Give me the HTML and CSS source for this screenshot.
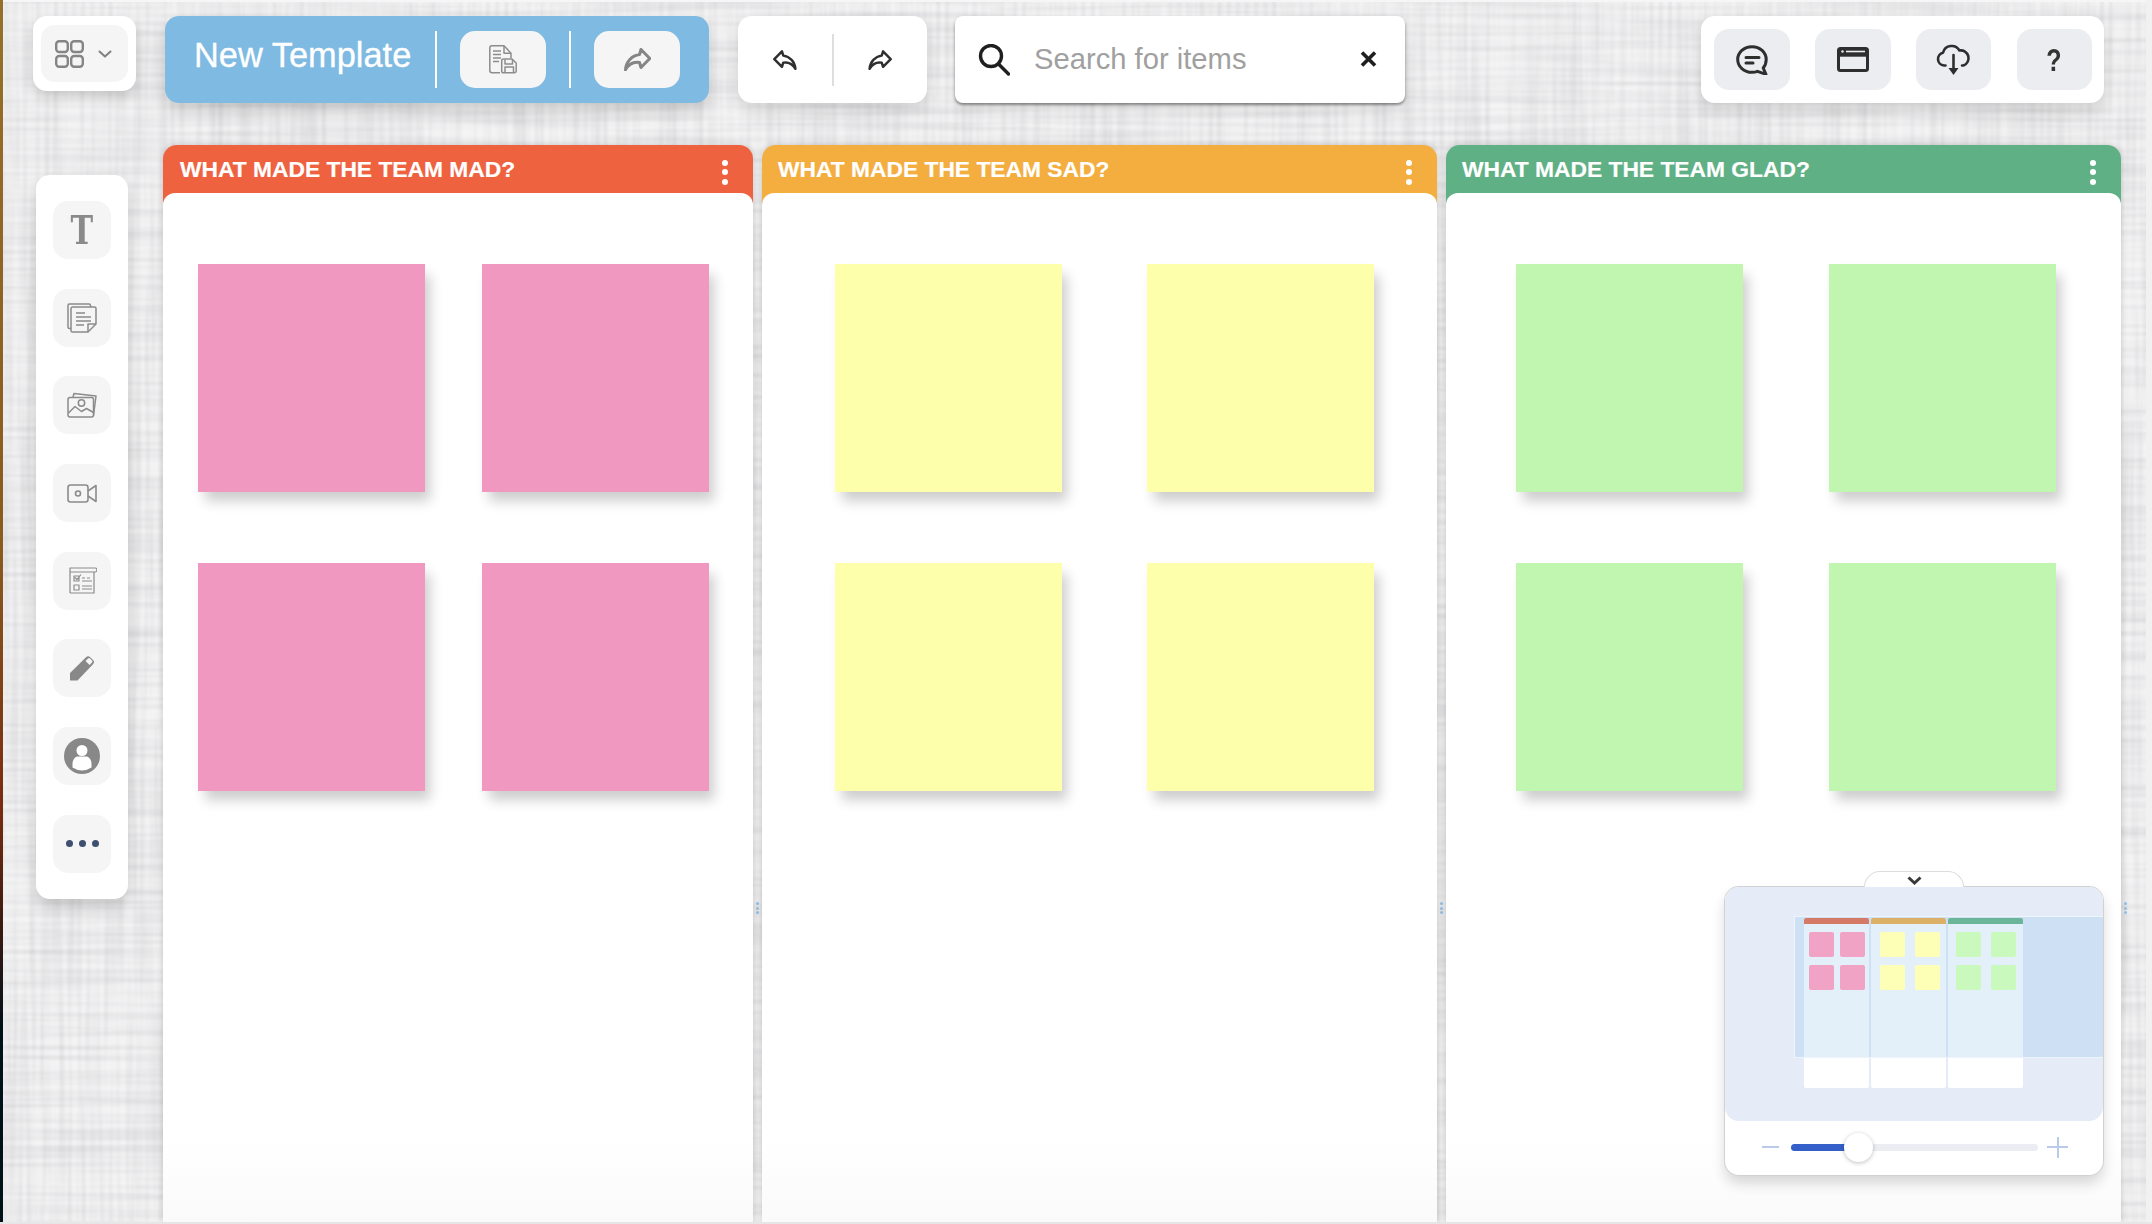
FILE: index.html
```html
<!DOCTYPE html>
<html lang="en">
<head>
<meta charset="utf-8">
<title>New Template</title>
<link rel="stylesheet" href="styles.css">
</head>
<body>
<svg class="linen" aria-hidden="true">
  <filter id="linen-filter" x="0" y="0" width="100%" height="100%" color-interpolation-filters="sRGB">
    <feTurbulence type="fractalNoise" baseFrequency="0.005 0.22" numOctaves="3" seed="4" result="a"/>
    <feColorMatrix in="a" type="matrix" values="0 0 0 0 0.35  0 0 0 0 0.35  0 0 0 0 0.38  0.24 0 0 0 -0.09" result="ha"/>
    <feTurbulence type="fractalNoise" baseFrequency="0.22 0.005" numOctaves="3" seed="9" result="b"/>
    <feColorMatrix in="b" type="matrix" values="0 0 0 0 0.35  0 0 0 0 0.35  0 0 0 0 0.38  0.24 0 0 0 -0.09" result="va"/>
    <feFlood flood-color="#f4f4f5" result="base"/>
    <feMerge result="woven">
      <feMergeNode in="base"/>
      <feMergeNode in="ha"/>
      <feMergeNode in="va"/>
    </feMerge>
    <feGaussianBlur in="woven" stdDeviation="0.8"/>
  </filter>
  <rect width="100%" height="100%" filter="url(#linen-filter)"/>
</svg>

<header class="toolbar">
  <div class="logo-box">
    <button class="logo-btn">
      <svg class="ico-apps" viewBox="0 0 29 28"><rect x="1.2" y="1.2" width="11.6" height="10.8" rx="3"/><rect x="16.2" y="1.2" width="11.6" height="10.8" rx="3"/><rect x="1.2" y="16" width="11.6" height="10.8" rx="3"/><rect x="16.2" y="16" width="11.6" height="10.8" rx="3"/></svg>
      <svg class="ico-caret" viewBox="0 0 14 8"><path d="M1.5 1.5 7 6.5l5.5-5"/></svg>
    </button>
  </div>

  <div class="title-bar">
    <div class="title">New Template</div>
    <span class="sep"></span>
    <button class="tb-btn">
      <svg class="ico-save" viewBox="0 0 28 29">
        <path d="M11 27.8H3A2.2 2.2 0 0 1 .8 25.6V3A2.2 2.2 0 0 1 3 .8h12l7 7.4v5"/>
        <path d="M15 1v7.2h7"/>
        <path d="M4 6h8M4 9.5h8M4 13h8M4 16.5h6"/>
        <path d="M14.5 14h8.5l4.2 4v8a1.8 1.8 0 0 1-1.8 1.8H14.5a1.8 1.8 0 0 1-1.8-1.8V15.800A1.8 1.8 0 0 1 14.5 14z"/>
        <path d="M16 14.5v4.5h7.500v-4.500M16 27.500v-5.500h8.500v5.500"/>
      </svg>
    </button>
    <span class="sep"></span>
    <button class="tb-btn">
      <svg class="ico-arrow grey" viewBox="0 0 27 23"><path d="M17 1.5 25.800 10.500 17 19.500 15.500 14.500C9.500 13.500 4.500 16.500 1.500 21.800 2 13.500 8 7.500 15.500 6.500z"/></svg>
    </button>
  </div>

  <div class="history">
    <button class="hist-btn"><svg class="ico-arrow small flip" viewBox="0 0 27 23"><path d="M17 1.5 25.800 10.500 17 19.500 15.500 14.500C9.500 13.500 4.500 16.500 1.500 21.800 2 13.500 8 7.500 15.500 6.500z"/></svg></button>
    <span class="hist-sep"></span>
    <button class="hist-btn"><svg class="ico-arrow small" viewBox="0 0 27 23"><path d="M17 1.5 25.800 10.500 17 19.500 15.500 14.500C9.500 13.500 4.500 16.500 1.500 21.800 2 13.500 8 7.500 15.500 6.500z"/></svg></button>
  </div>

  <div class="search">
    <svg class="ico-search" viewBox="0 0 32 32"><circle cx="13" cy="12" r="10.500"/><path d="M20.500 20 30.500 30"/></svg>
    <span class="search-text">Search for items</span>
    <svg class="ico-close" viewBox="0 0 17 16"><path d="M2 1.500 15 14.500M15 1.500 2 14.500"/></svg>
  </div>

  <div class="actions">
    <button class="act-btn">
      <svg class="ico-act ico-chat" viewBox="0 0 32 30"><path d="M16 1.700C8 1.700 1.700 7.500 1.700 14.500S8 27.300 16 27.300c2 0 3.800-.3 5.500-1l8.500 3-2.800-6.300c1.900-2.300 3-5.200 3-8.500C30.200 7.500 24 1.700 16 1.700z"/><path d="M10 12.500h13M10 18h7"/></svg>
    </button>
    <button class="act-btn">
      <svg class="ico-act ico-window" viewBox="0 0 32 25"><rect x="1.500" y="1.500" width="29" height="22" rx="2"/><path d="M1.500 8.200h29"/><path class="win-fill" d="M2 2h28v5H2z"/><path class="win-slit" d="M9 4.500h19"/><circle class="win-dot" cx="5.500" cy="4.500" r="1.200"/></svg>
    </button>
    <button class="act-btn">
      <svg class="ico-act ico-cloud" viewBox="0 0 36 33"><path d="M9.500 22.500H8A6.500 6.500 0 0 1 7 9.700 9 9 0 0 1 23.500 7.500 7.800 7.800 0 0 1 27.500 22.500H26"/><path d="M17.500 12v17"/><path class="cloud-head" d="M12.500 25h10l-5 7z"/></svg>
    </button>
    <button class="act-btn act-help"><span class="help-mark">?</span></button>
  </div>
</header>

<main class="workspace">
  <nav class="tools">
    <button class="tool"><span class="tool-t">T</span></button>
    <button class="tool">
      <svg class="ico-tool ico-notes" viewBox="0 0 30 30"><path d="M4 25.500H2.500a1.500 1.500 0 0 1-1.500-1.500V2.500A1.500 1.500 0 0 1 2.500 1H22a1.500 1.500 0 0 1 1.500 1.500V4"/><path d="M5.500 4h22a1.500 1.500 0 0 1 1.500 1.500V21l-8 8H5.500A1.500 1.500 0 0 1 4 27.500v-22A1.500 1.500 0 0 1 5.500 4z"/><path d="M21 29v-8h8"/><path d="M9 10h9M9 14h15M9 18h15M9 22h8"/></svg>
    </button>
    <button class="tool">
      <svg class="ico-tool ico-image" viewBox="0 0 30 26"><path d="M6 5 7 1.500 29 4l-2.500 19.500"/><rect x="1" y="5.500" width="25.500" height="19.500" rx="2"/><circle cx="14.500" cy="11" r="3.200"/><path d="M1.500 21 8 14.500l6.500 5 5-3 7 4"/></svg>
    </button>
    <button class="tool">
      <svg class="ico-tool ico-video" viewBox="0 0 30 19"><rect x="1" y="1" width="20" height="17" rx="2.500"/><circle cx="11" cy="9.500" r="2.500"/><path d="M21 7 29 1.500v16L21 12"/></svg>
    </button>
    <button class="tool">
      <svg class="ico-tool ico-check" viewBox="0 0 30 27"><path d="M3 26V1h25a2 2 0 0 1 0 4H3M27 5v21H3"/><path d="M7 9h5v5H7zM7 18h5v5H7zM8 10.500l2 2 4-5M15 11h3M20 11h3M15 14h10M15 19h10M15 22h10"/></svg>
    </button>
    <button class="tool">
      <svg class="ico-tool ico-pencil" viewBox="0 0 26 26"><path d="M1 25.500V18L17 2.300a3 3 0 0 1 4.200 0L24 5a3 3 0 0 1 0 4.200L8.500 25.500zM16.500 6 20.500 10 23 7.500a1.500 1.500 0 0 0 0-2l-2-2a1.500 1.500 0 0 0-2 0z" fill-rule="evenodd"/></svg>
    </button>
    <button class="tool">
      <svg class="ico-tool ico-user" viewBox="0 0 36 36"><circle class="u-bg" cx="18" cy="18" r="18"/><circle class="u-fg" cx="18" cy="12.500" r="5.500"/><path class="u-fg" d="M8.500 26c0-5 3-7.500 5.500-7.500h8c2.500 0 5.500 2.500 5.500 7.500v3.500a17 17 0 0 1-19 0z"/></svg>
    </button>
    <button class="tool tool-more"><span></span><span></span><span></span></button>
  </nav>

  <section class="board">
    <article class="column col-mad">
      <div class="col-head"><h2>WHAT MADE THE TEAM MAD?</h2><div class="kebab"><i></i><i></i><i></i></div></div>
      <div class="col-body">
        <div class="note"></div><div class="note"></div><div class="note"></div><div class="note"></div>
      </div>
    </article>
    <div class="splitter"><i></i><i></i><i></i></div>
    <article class="column col-sad">
      <div class="col-head"><h2>WHAT MADE THE TEAM SAD?</h2><div class="kebab"><i></i><i></i><i></i></div></div>
      <div class="col-body">
        <div class="note"></div><div class="note"></div><div class="note"></div><div class="note"></div>
      </div>
    </article>
    <div class="splitter"><i></i><i></i><i></i></div>
    <article class="column col-glad">
      <div class="col-head"><h2>WHAT MADE THE TEAM GLAD?</h2><div class="kebab"><i></i><i></i><i></i></div></div>
      <div class="col-body">
        <div class="note"></div><div class="note"></div><div class="note"></div><div class="note"></div>
      </div>
    </article>
    <div class="splitter"><i></i><i></i><i></i></div>
  </section>
</main>

<aside class="minimap">
  <div class="mini-tab"><svg viewBox="0 0 15 9"><path d="M1.500 1.500 7.500 7l6-5.500"/></svg></div>
  <div class="mini-map">
    <div class="mini-board">
      <div class="mini-col mini-mad"><div class="mini-head"></div><div class="mini-notes"><b></b><b></b><b></b><b></b></div></div>
      <div class="mini-col mini-sad"><div class="mini-head"></div><div class="mini-notes"><b></b><b></b><b></b><b></b></div></div>
      <div class="mini-col mini-glad"><div class="mini-head"></div><div class="mini-notes"><b></b><b></b><b></b><b></b></div></div>
    </div>
    <div class="mini-view"></div>
  </div>
  <div class="zoom-row">
    <span class="zoom-minus"></span>
    <div class="zoom-track"><div class="zoom-fill"></div><div class="zoom-knob"></div></div>
    <span class="zoom-plus"></span>
  </div>
</aside>
</body>
</html>
```

FILE: styles.css
```css
* { box-sizing: border-box; }

html, body { margin: 0; padding: 0; }

body {
  position: relative;
  width: 2152px;
  height: 1224px;
  overflow: hidden;
  background: #f0f0f2;
  font-family: "Liberation Sans", Arial, sans-serif;
  display: flex;
  flex-direction: column;
  border-bottom: 2px solid #e6e6e6;
}

/* screen-edge sliver of the desktop behind the window */
body::before {
  content: "";
  position: absolute;
  left: 0;
  top: 0;
  width: 3px;
  height: 100%;
  background: linear-gradient(#96702a 0%, #8a5a1e 45%, #7a2c10 66%, #3a1a12 76%, #02101a 84%, #02101a 100%);
  z-index: 5;
}

/* pale scrollbar gutter along the right edge */
body::after {
  content: "";
  position: absolute;
  right: 0;
  top: 0;
  width: 6px;
  height: 100%;
  background: #f1f1f2;
}

.linen {
  position: absolute;
  left: 0;
  top: 0;
  width: 100%;
  height: 100%;
}

button {
  border: 0;
  padding: 0;
  font: inherit;
  background: none;
}

/* ---------- toolbar ---------- */
.toolbar {
  position: relative;
  display: flex;
  align-items: flex-start;
  flex: 0 0 145px;
  padding: 14px 48px 0 33px;
  border-top: 2px solid #f6f6f7;
}

.logo-box {
  flex: 0 0 103px;
  height: 75px;
  padding: 9px 8px;
  margin-right: 29px;
  background: #fff;
  border-radius: 14px;
  box-shadow: 0 6px 14px rgba(0, 0, 0, .16);
}

.logo-btn {
  display: flex;
  align-items: center;
  gap: 14px;
  width: 100%;
  height: 100%;
  padding-left: 14px;
  background: #f5f5f5;
  border-radius: 14px;
}

.ico-apps { width: 29px; height: 28px; fill: none; stroke: #858585; stroke-width: 2.4; }
.ico-caret { width: 14px; height: 8px; fill: none; stroke: #808080; stroke-width: 2; stroke-linecap: round; stroke-linejoin: round; }

.title-bar {
  display: flex;
  align-items: center;
  flex: 0 0 544px;
  height: 87px;
  padding: 15px 29px 15px 29px;
  margin-right: 29px;
  background: #7fbae2;
  border-radius: 14px;
  box-shadow: 0 8px 16px rgba(0, 0, 0, .16);
}

.title {
  flex: 0 0 241px;
  padding-bottom: 9px;
  font-size: 34.4px;
  color: #fff;
  white-space: nowrap;
  -webkit-text-stroke: .3px #fff;
}

.sep {
  flex: 0 0 2px;
  height: 57px;
  background: #fff;
}

.tb-btn {
  display: flex;
  align-items: center;
  justify-content: center;
  flex: 0 0 86px;
  height: 57px;
  margin: 0 23px 0 23px;
  background: #f5f5f6;
  border-radius: 15px;
}
.tb-btn:last-child { margin-right: 0; }

.ico-save { width: 28px; height: 29px; fill: none; stroke: #8d8d8d; stroke-width: 1.5; stroke-linejoin: round; }

.ico-arrow { fill: none; stroke-linejoin: round; stroke-linecap: round; }
.ico-arrow.grey { width: 27px; height: 23px; stroke: #858585; stroke-width: 3; }
.ico-arrow.small { width: 24px; height: 20px; stroke: #2f2f2f; stroke-width: 2.8; }
.flip { transform: scaleX(-1); }

.history {
  display: flex;
  align-items: center;
  flex: 0 0 189px;
  height: 87px;
  margin-right: 28px;
  background: #fff;
  border-radius: 14px;
  box-shadow: 0 8px 16px rgba(0, 0, 0, .12);
}

.hist-btn {
  display: flex;
  align-items: center;
  justify-content: center;
  flex: 1;
  height: 100%;
}

.hist-sep { flex: 0 0 2px; height: 52px; background: #dedede; }

.search {
  display: flex;
  align-items: center;
  flex: 0 0 450px;
  height: 87px;
  padding: 0 28px 0 23px;
  background: #fff;
  border-radius: 8px;
  box-shadow: 0 2px 3px rgba(0, 0, 0, .42), 0 8px 16px rgba(0, 0, 0, .08);
}

.ico-search { flex: 0 0 32px; height: 32px; fill: none; stroke: #1f1f1f; stroke-width: 3.4; stroke-linecap: round; }

.search-text {
  flex: 1;
  margin-left: 24px;
  font-size: 29.2px;
  color: #a0a0a0;
  white-space: nowrap;
}

.ico-close { flex: 0 0 17px; height: 16px; margin-bottom: 2px; fill: none; stroke: #1f1f1f; stroke-width: 3.6; }

.actions {
  display: grid;
  grid-template-columns: repeat(4, 75.5px);
  column-gap: 25.2px;
  height: 87px;
  padding: 13px 12px 0 13px;
  margin-left: auto;
  background: #fff;
  border-radius: 14px;
  box-shadow: 0 8px 18px rgba(0, 0, 0, .14);
}

.act-btn {
  display: flex;
  align-items: center;
  justify-content: center;
  height: 61px;
  background: #ecedf0;
  border-radius: 15px;
}

.ico-act { fill: none; stroke: #2e2e2e; stroke-width: 3; stroke-linejoin: round; }
.ico-chat { width: 32px; height: 30px; stroke-linecap: round; }
.ico-window { width: 32px; height: 25px; }
.win-fill { fill: #2e2e2e; stroke: none; }
.win-slit { stroke: #ecedf0; stroke-width: 1.6; }
.win-dot { fill: #ecedf0; stroke: none; }
.ico-cloud { width: 36px; height: 33px; stroke-width: 2.6; stroke-linecap: round; }
.cloud-head { fill: #2e2e2e; stroke: none; }

.help-mark {
  display: block;
  font-size: 32px;
  line-height: 1;
  font-weight: 700;
  color: #333;
  transform: scaleX(.78);
}

/* ---------- workspace ---------- */
.workspace {
  position: relative;
  display: flex;
  align-items: flex-start;
  flex: 1;
  min-height: 0;
  padding-left: 36px;
}

.tools {
  display: flex;
  flex-direction: column;
  align-items: center;
  gap: 29.7px;
  flex: 0 0 92px;
  margin-top: 30px;
  padding: 26px 0;
  background: #fff;
  border-radius: 14px;
  box-shadow: 0 8px 16px rgba(0, 0, 0, .16);
}

.tool {
  display: flex;
  align-items: center;
  justify-content: center;
  width: 58px;
  height: 58px;
  background: #f5f5f5;
  border-radius: 15px;
}

.tool-t {
  display: block;
  font-family: "DejaVu Serif", serif;
  font-weight: 700;
  font-size: 40px;
  line-height: 1;
  color: #8a8a8a;
  transform: scaleX(.76);
}

.ico-tool { fill: none; stroke: #8b8b8b; stroke-width: 1.5; stroke-linejoin: round; }
.ico-notes { width: 30px; height: 30px; }
.ico-image { width: 30px; height: 26px; }
.ico-video { width: 30px; height: 19px; stroke-width: 1.6; }
.ico-check { width: 30px; height: 27px; stroke-width: 1.2; }
.ico-pencil { width: 26px; height: 26px; fill: #888; stroke: none; }
.ico-user { width: 36px; height: 36px; stroke: none; }
.u-bg { fill: #888; }
.u-fg { fill: #fff; }

.tool-more { gap: 6px; }
.tool-more span {
  width: 7px;
  height: 7px;
  border-radius: 50%;
  background: #3f4f70;
}

/* ---------- board ---------- */
.board {
  display: flex;
  align-self: stretch;
  flex: 1;
  margin-left: 35px;
}

.column {
  display: flex;
  flex-direction: column;
  border-radius: 14px 14px 0 0;
  box-shadow: 0 0 7px rgba(0, 0, 0, .18);
}

.col-mad  { flex: 0 0 590px; background: #ee623f; }
.col-sad  { flex: 0 0 675px; background: #f3ae3f; }
.col-glad { flex: 0 0 675px; background: #5fb085; }

.col-head {
  display: flex;
  align-items: center;
  justify-content: space-between;
  flex: 0 0 48px;
  padding: 0 25px 0 16px;
  color: #fff;
}
.col-mad .col-head { padding-left: 17px; }

.col-head h2 {
  margin: 0;
  font-size: 22.8px;
  font-weight: 700;
  white-space: nowrap;
  -webkit-text-stroke: .2px #fff;
}

.kebab {
  display: flex;
  flex-direction: column;
  gap: 3.5px;
  margin-top: 6px;
}

.kebab i {
  display: block;
  width: 6px;
  height: 6px;
  border-radius: 50%;
  background: #fff;
}

.col-body {
  flex: 1;
  display: grid;
  grid-template-rows: 228px 228px;
  row-gap: 71px;
  align-content: start;
  padding-top: 71px;
  background: linear-gradient(#fff 0, #fff 92%, #fafafa 100%);
  border-radius: 12px 12px 0 0;
}

.col-mad .col-body  { grid-template-columns: 227px 227px; column-gap: 57px; padding-left: 35px; }
.col-sad .col-body  { grid-template-columns: 227px 227px; column-gap: 85px; padding-left: 73px; }
.col-glad .col-body { grid-template-columns: 227px 227px; column-gap: 86px; padding-left: 69.5px; }

.note { box-shadow: 6px 10px 12px -1px rgba(0, 0, 0, .2); }
.col-mad .note  { background: #f198c0; }
.col-sad .note  { background: #feffab; }
.col-glad .note { background: #c0f6b0; }

.splitter {
  display: flex;
  flex-direction: column;
  align-items: center;
  gap: 1.5px;
  flex: 0 0 9px;
  padding-top: 757px;
}

.splitter i {
  display: block;
  width: 3px;
  height: 3px;
  border-radius: 50%;
  background: #8fbfe6;
}

/* ---------- minimap ---------- */
.minimap {
  position: absolute;
  right: 49px;
  top: 887px;
  width: 378px;
  height: 288px;
  background: #fff;
  border-radius: 14px;
  box-shadow: 0 0 0 1px #d2d2d2, 0 8px 14px rgba(0, 0, 0, .16);
}

.mini-tab {
  position: absolute;
  left: 139px;
  top: -16px;
  display: flex;
  justify-content: center;
  width: 100px;
  height: 16px;
  padding-top: 4px;
  background: #fff;
  border: 1px solid #dcdcdc;
  border-bottom: 0;
  border-radius: 16px 16px 0 0;
}

.mini-tab svg { width: 15px; height: 9px; fill: none; stroke: #3a3a3a; stroke-width: 3; }

.mini-map {
  position: relative;
  height: 234px;
  overflow: hidden;
  background: #e5ecf8;
  border-radius: 14px;
}

.mini-board {
  position: absolute;
  left: 79px;
  top: 31px;
  display: flex;
  gap: 2px;
  height: 170px;
}

.mini-col {
  background: #fff;
  border-radius: 2px;
}

.mini-mad  { width: 65px; }
.mini-sad  { width: 75px; }
.mini-glad { width: 75px; }

.mini-head {
  position: relative;
  z-index: 2;
  height: 6px;
  border-radius: 2px 2px 0 0;
}

.mini-mad .mini-head  { background: #d67a68; }
.mini-sad .mini-head  { background: #dcb066; }
.mini-glad .mini-head { background: #6bb59a; }

.mini-notes {
  position: relative;
  z-index: 2;
  display: grid;
  grid-template-rows: 25px 25px;
  row-gap: 8px;
  padding-top: 8px;
}

.mini-mad .mini-notes  { grid-template-columns: 25px 25px; column-gap: 6px;  padding-left: 5px; }
.mini-sad .mini-notes  { grid-template-columns: 25px 25px; column-gap: 10px; padding-left: 9px; }
.mini-glad .mini-notes { grid-template-columns: 25px 25px; column-gap: 10px; padding-left: 8px; }

.mini-notes b { display: block; border-radius: 2px; }
.mini-mad b  { background: #f1a3c5; }
.mini-sad b  { background: #feffb6; }
.mini-glad b { background: #c9f9bd; }

.mini-view {
  position: absolute;
  left: 69px;
  top: 29px;
  right: 0;
  height: 142px;
  z-index: 1;
  background: rgba(100, 170, 230, .18);
  border: 1.5px solid #eef4fb;
  border-right: 0;
}

.zoom-row {
  display: flex;
  align-items: center;
  height: 54px;
  padding: 0 0 2px 37px;
}

.zoom-minus {
  flex: 0 0 17px;
  height: 2px;
  margin-right: 12px;
  background: #b9cbe8;
}

.zoom-track {
  position: relative;
  flex: 0 0 247px;
  height: 7px;
  margin-right: 9px;
  background: #ecedf2;
  border-radius: 4px;
}

.zoom-fill {
  width: 64px;
  height: 100%;
  background: #3560c9;
  border-radius: 4px 0 0 4px;
}

.zoom-knob {
  position: absolute;
  left: 53px;
  top: -11px;
  width: 29px;
  height: 29px;
  background: #fff;
  border-radius: 50%;
  box-shadow: 0 1px 4px rgba(0, 0, 0, .25);
}

.zoom-plus {
  position: relative;
  flex: 0 0 21px;
  height: 2px;
  background: #b9cbe8;
}

.zoom-plus::after {
  content: "";
  position: absolute;
  left: 9.5px;
  top: -9.5px;
  width: 2px;
  height: 21px;
  background: #b9cbe8;
}
```
